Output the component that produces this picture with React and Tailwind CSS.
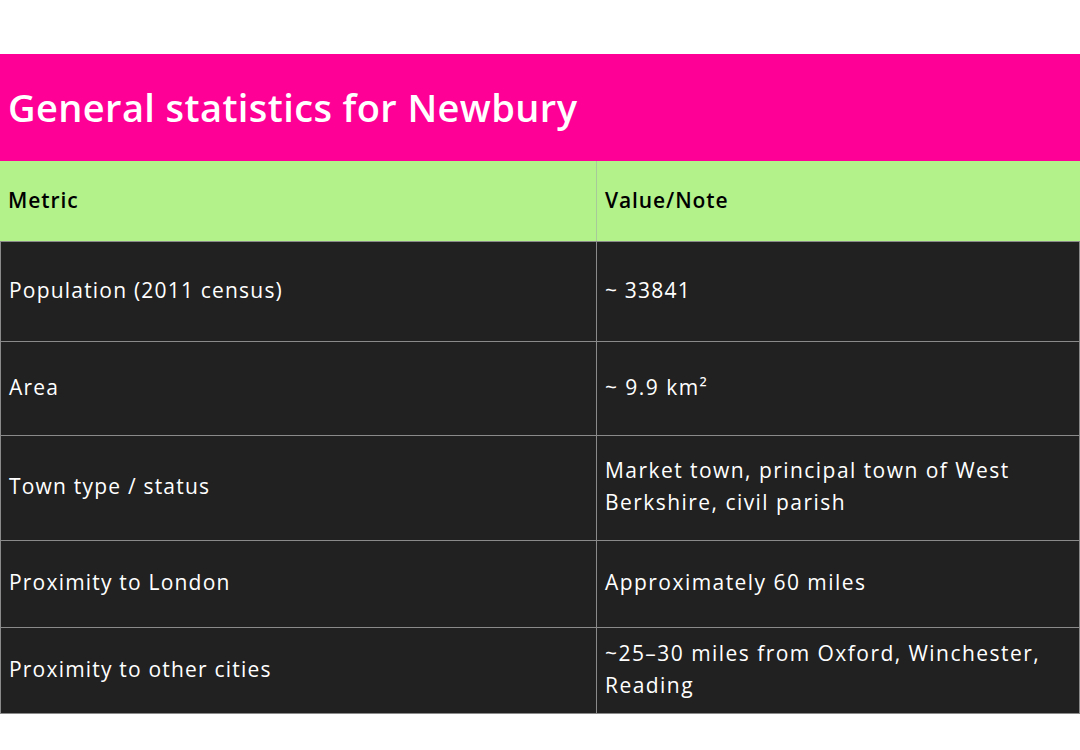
import React from "react";

const rows = [
  { metric: "Population (2011 census)", value: "~ 33841", h: "h-[100px]" },
  { metric: "Area", value: "~ 9.9 km²", h: "h-[94px]" },
  {
    metric: "Town type / status",
    value: "Market town, principal town of West Berkshire, civil parish",
    h: "h-[105px]",
  },
  { metric: "Proximity to London", value: "Approximately 60 miles", h: "h-[87px]" },
  {
    metric: "Proximity to other cities",
    value: "~25–30 miles from Oxford, Winchester, Reading",
    h: "h-[86px]",
  },
];

export default function App() {
  return (
    <div
      className="w-[1080px] h-[750px] bg-white pt-[54px]"
      style={{ fontFamily: "'Open Sans', 'Liberation Sans', sans-serif" }}
    >
      <div className="h-[107px] bg-[#ff0096] flex items-center px-2">
        <h1 className="text-[38px] font-semibold text-white tracking-[0.4px]">
          General statistics for Newbury
        </h1>
      </div>
      <div className="grid grid-cols-[597px_1fr] h-[80px] bg-[#b3f28b] text-black text-[21px] font-semibold tracking-[0.9px]">
        <div className="flex items-center px-2 border-r border-[#a8c99a]">Metric</div>
        <div className="flex items-center px-2">Value/Note</div>
      </div>
      <div className="bg-[#212121] text-white text-[21px] leading-[32px] tracking-[1.2px] border-x border-b border-[#8a8a8a]">
        {rows.map((r, i) => (
          <div
            key={i}
            className={`grid grid-cols-[596px_1fr] border-t border-[#8a8a8a] ${r.h}`}
          >
            <div className="flex items-center px-2 pb-1 border-r border-[#8a8a8a]">{r.metric}</div>
            <div className="flex items-center px-2 pb-1 pr-6">
              <span className={i === 0 ? "" : "tracking-[1.45px]"}>{r.value}</span>
            </div>
          </div>
        ))}
      </div>
    </div>
  );
}
